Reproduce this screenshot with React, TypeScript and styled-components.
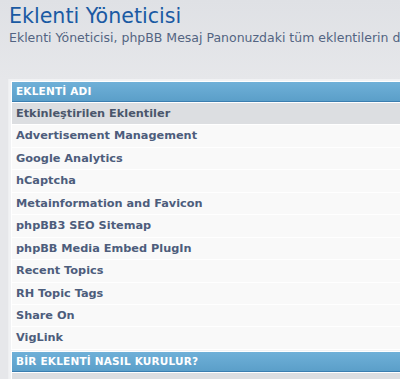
import React from "react";
import styled, { createGlobalStyle } from "styled-components";

const Global = createGlobalStyle`
  html, body { margin: 0; padding: 0; }
  body {
    background: linear-gradient(to bottom, #dfe1e5 0px, #e6e7ea 80px, #e6e7ea 100%);
    font-family: "DejaVu Sans", Verdana, sans-serif;
    width: 400px;
    height: 379px;
    overflow: hidden;
  }
`;

const Page = styled.div`
  padding: 3px 0 0 9px;
`;

const Title = styled.h1`
  margin: 0;
  font-family: "DejaVu Sans", Verdana, sans-serif;
  font-weight: normal;
  font-size: 20.6px;
  line-height: 26px;
  color: #1a5aa3;
  white-space: nowrap;
`;

const Intro = styled.p`
  margin: 1px 0 0 0;
  font-size: 12.5px;
  line-height: 15px;
  color: #536482;
  white-space: nowrap;
  overflow: hidden;
`;

const Panel = styled.div`
  margin: 34px 0 0 -1px;
  background: #f1f2f4;
  border-left: 1px solid #eeeff1;
  padding: 2px 0 0 2px;
`;

const Table = styled.div<{ $gapTop?: boolean }>`
  display: flex;
  flex-direction: column;
  gap: 1px;
  background: #ffffff;
  padding: 1px 0 1px 1px;
  margin-top: ${(p) => (p.$gapTop ? "1px" : "0")};
`;

const Header = styled.div`
  height: 19px;
  border-bottom: 1px solid #3b7eb0;
  background: linear-gradient(to bottom, #6fb0d8, #5b9fc9);
  color: #ffffff;
  font-weight: bold;
  font-size: 10.5px;
  line-height: 19px;
  padding-left: 4px;
  letter-spacing: 0.2px;
  white-space: nowrap;
`;

const Row = styled.div<{ $section?: boolean }>`
  height: 21.45px;
  background: ${(p) => (p.$section ? "#dcdee1" : "#f9f9f9")};
  color: ${(p) => (p.$section ? "#4a566b" : "#4d5d7c")};
  font-weight: bold;
  font-size: 11.3px;
  line-height: 21.45px;
  padding-left: 4px;
  white-space: nowrap;
`;

const plugins = [
  "Advertisement Management",
  "Google Analytics",
  "hCaptcha",
  "Metainformation and Favicon",
  "phpBB3 SEO Sitemap",
  "phpBB Media Embed PlugIn",
  "Recent Topics",
  "RH Topic Tags",
  "Share On",
  "VigLink",
];

export default function App() {
  return (
    <>
      <Global />
      <Page>
        <Title>Eklenti Yöneticisi</Title>
        <Intro>
          Eklenti Yöneticisi, phpBB Mesaj Panonuzdaki tüm eklentilerin durumunu görebileceğiniz ve yönetebileceğiniz bir araçtır.
        </Intro>
        <Panel>
          <Table>
            <Header>EKLENTİ ADI</Header>
            <Row $section>Etkinleştirilen Eklentiler</Row>
            {plugins.map((p) => (
              <Row key={p}>{p}</Row>
            ))}
          </Table>
          <Table $gapTop>
            <Header>BİR EKLENTİ NASIL KURULUR?</Header>
            <Row $section />
          </Table>
        </Panel>
      </Page>
    </>
  );
}
